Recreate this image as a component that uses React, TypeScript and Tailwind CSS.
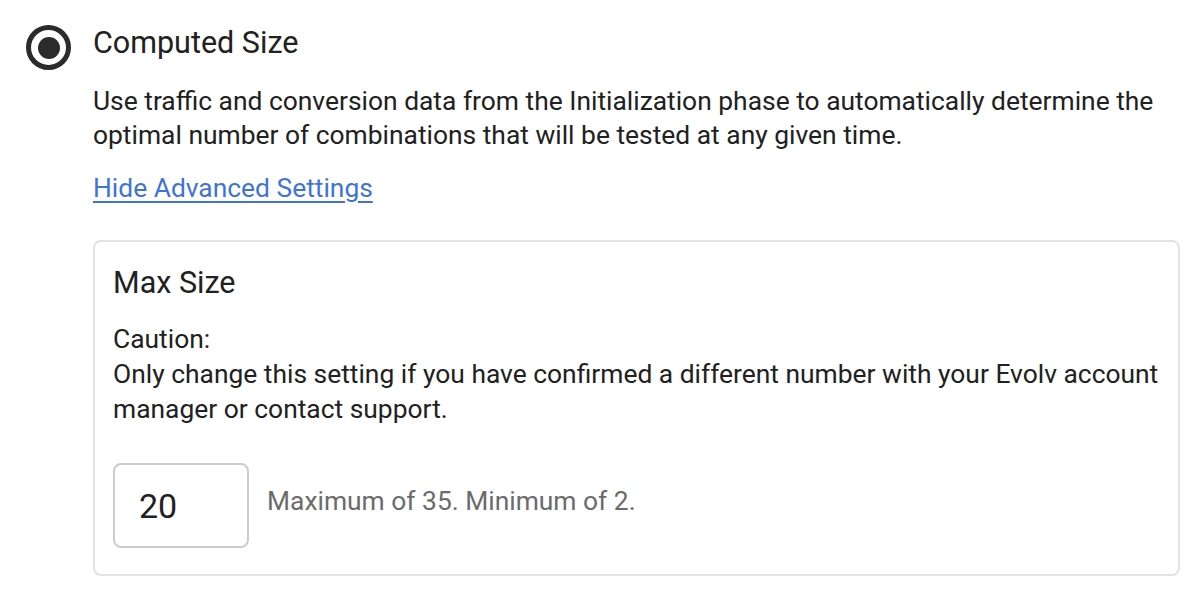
import { useState } from "react";

function App() {
  const [maxSize, setMaxSize] = useState("20");

  return (
    <div className="min-h-screen bg-white text-[#212121] font-['Roboto',sans-serif]">
      <div className="flex gap-[22px] pl-[26px] pr-[22px] pt-[24px]">
        <div className="shrink-0 pt-[1px]">
          <div className="w-[45px] h-[45px] rounded-full border-[5px] border-[#2b2b2b] flex items-center justify-center">
            <div className="w-[22px] h-[22px] rounded-full bg-[#2b2b2b]" />
          </div>
        </div>
        <div className="flex-1">
          <h2 className="text-[30.5px] leading-[40px] font-normal -mt-[1px]">Computed Size</h2>
          <p className="mt-[21px] text-[26.4px] leading-[34px]">
            Use traffic and conversion data from the Initialization phase to automatically determine the
            optimal number of combinations that will be tested at any given time.
          </p>
          <a
            href="#"
            className="inline-block mt-[19px] text-[26.4px] leading-[34px] text-[#3f74d6] underline underline-offset-[4px]"
          >
            Hide Advanced Settings
          </a>
          <div className="mt-[35px] border-2 border-[#e3e3e3] rounded-[8px] px-[18px] pt-[22px] pb-[26px]">
            <h3 className="text-[30.5px] leading-[38px] font-normal">Max Size</h3>
            <p className="mt-[20px] text-[26.4px] leading-[35px]">
              Caution:
              <br />
              Only change this setting if you have confirmed a different number with your Evolv account
              manager or contact support.
            </p>
            <div className="mt-[36px] flex items-center gap-[18px]">
              <input
                type="text"
                value={maxSize}
                onChange={e => setMaxSize(e.target.value)}
                className="w-[136px] h-[85px] rounded-[8px] border-2 border-[#cccccc] px-[24px] text-[34px] text-[#212121] outline-none"
              />
              <span className="text-[26.4px] text-[#6b6b6b] -mt-[8px]">Maximum of 35. Minimum of 2.</span>
            </div>
          </div>
        </div>
      </div>
    </div>
  );
}

export default App;
